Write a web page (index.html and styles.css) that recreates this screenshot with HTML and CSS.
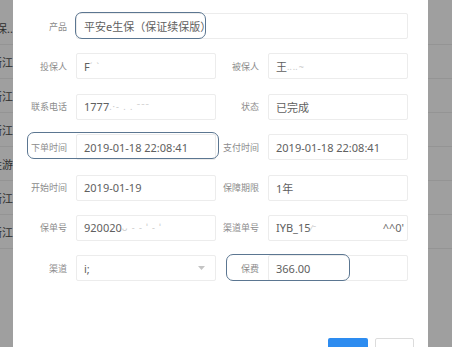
FILE: index.html
```html
<!DOCTYPE html>
<html lang="zh">
<head>
   <meta charset="UTF-8">
   <meta name="viewport" content="width=device-width, initial-scale=1.0">
   <title>保单详情</title>
   <link rel="stylesheet" href="styles.css">
</head>
<body>
   <div class="screen">
       <div class="backdrop left">
           <div class="bg-row">平安保..</div>
           <div class="bg-row">浙江</div>
           <div class="bg-row">浙江</div>
           <div class="bg-row">浙江</div>
           <div class="bg-row">胜游</div>
           <div class="bg-row">浙江</div>
           <div class="bg-row">浙江</div>
       </div>

       <div class="dialog">
           <div class="dialog-head"></div>

           <div class="form">
               <div class="row">
                   <div class="field">
                       <span class="lbl">产品</span>
                       <div class="input wide">平安e生保（保证续保版）<span class="mark mark-product"></span></div>
                   </div>
               </div>

               <div class="row">
                   <div class="field">
                       <span class="lbl">投保人</span>
                       <div class="input">F<span class="blur">ˊ ˋ</span></div>
                   </div>
                   <div class="field">
                       <span class="lbl lbl-r">被保人</span>
                       <div class="input">王<span class="blur">‥‥~</span></div>
                   </div>
               </div>

               <div class="row">
                   <div class="field">
                       <span class="lbl">联系电话</span>
                       <div class="input">1777<span class="blur">.·- . .  ˉˉˉ</span></div>
                   </div>
                   <div class="field">
                       <span class="lbl lbl-r">状态</span>
                       <div class="input">已完成</div>
                   </div>
               </div>

               <div class="row">
                   <div class="field">
                       <span class="lbl">下单时间</span>
                       <div class="input">2019-01-18 22:08:41</div>
                       <span class="mark mark-ordered"></span>
                   </div>
                   <div class="field">
                       <span class="lbl lbl-r">支付时间</span>
                       <div class="input">2019-01-18 22:08:41</div>
                   </div>
               </div>

               <div class="row">
                   <div class="field">
                       <span class="lbl">开始时间</span>
                       <div class="input">2019-01-19</div>
                   </div>
                   <div class="field">
                       <span class="lbl lbl-r">保障期限</span>
                       <div class="input">1年</div>
                   </div>
               </div>

               <div class="row">
                   <div class="field">
                       <span class="lbl">保单号</span>
                       <div class="input">920020<span class="blur">ᴗ     - - ˈ - ˈ</span></div>
                   </div>
                   <div class="field">
                       <span class="lbl lbl-r">渠道单号</span>
                       <div class="input split">
                           <span>IYB_15<span class="blur">⁄ˉ</span></span>
                           <span class="tail">^^0'</span>
                       </div>
                   </div>
               </div>

               <div class="row">
                   <div class="field">
                       <span class="lbl">渠道</span>
                       <div class="input select">
                           <span>i;</span>
                           <svg class="caret" width="7" height="4" viewBox="0 0 7 4"><path d="M0 0h7L3.5 4z" fill="#c4c4c4"/></svg>
                       </div>
                   </div>
                   <div class="field">
                       <span class="lbl lbl-r">保费</span>
                       <div class="input">366.00</div>
                       <span class="mark mark-fee"></span>
                   </div>
               </div>
           </div>

           <div class="footer">
               <span class="btn primary"></span>
               <span class="btn plain"></span>
           </div>
       </div>

       <div class="backdrop right">
           <div class="bg-row first"></div>
           <div class="bg-row"></div>
           <div class="bg-row"></div>
           <div class="bg-row"></div>
           <div class="bg-row"></div>
           <div class="bg-row"></div>
           <div class="bg-row"></div>
       </div>
   </div>
</body>
</html>
```

FILE: styles.css
```css
body {
    margin: 0;
    font-family: "Noto Sans", "Noto Sans CJK SC", sans-serif;
    color: #606060;
}

.screen {
    display: flex;
    width: 452px;
    height: 347px;
    overflow: hidden;
    background-color: #9f9f9f;
}

.backdrop {
    flex: none;
    background-color: #9f9f9f;
}

.backdrop.left {
    width: 13px;
    padding-top: 11px;
}

.backdrop.right {
    width: 24px;
}

.bg-row {
    box-sizing: border-box;
    height: 34px;
    border-bottom: 1px solid #949494;
    display: flex;
    align-items: center;
    justify-content: flex-end;
    overflow: hidden;
    white-space: nowrap;
    font-size: 11px;
    color: #2e2e2e;
}

.backdrop.right .bg-row.first {
    height: 45px;
}

.dialog {
    flex: none;
    width: 415px;
    background-color: #fff;
    display: flex;
    flex-direction: column;
}

.dialog-head {
    height: 6px;
    background-color: #f6f6f6;
}

.form {
    padding-top: 13px;
}

.row {
    display: flex;
    height: 26px;
    margin-bottom: 14.4px;
}

.field {
    position: relative;
    display: flex;
    align-items: center;
}

.lbl {
    width: 54px;
    margin-right: 9px;
    text-align: right;
    font-size: 9px;
    color: #8c8c8c;
}

.lbl.lbl-r {
    width: 43px;
}

.input {
    position: relative;
    box-sizing: border-box;
    width: 140px;
    height: 26px;
    padding: 0 7px;
    border: 1px solid #ececec;
    border-radius: 2px;
    display: flex;
    align-items: center;
    font-size: 11px;
    color: #606060;
    white-space: nowrap;
    overflow: hidden;
}

.input.wide {
    width: 332px;
    overflow: visible;
}

.input.split,
.input.select {
    justify-content: space-between;
}

.input .tail {
    color: #6a6a6a;
    margin-right: -4px;
}

.blur {
    color: #c8c8c8;
    font-size: 9px;
    letter-spacing: 1px;
}

.caret {
    margin-right: 3px;
}

/* annotation boxes drawn over the form */
.mark {
    position: absolute;
    box-sizing: border-box;
    border: 1.5px solid #5b7691;
    border-radius: 7px;
    pointer-events: none;
}

.mark-product {
    left: -2px;
    top: -2px;
    width: 131px;
    height: 27px;
}

.mark-ordered {
    left: 14px;
    top: -2px;
    width: 192px;
    height: 27px;
}

.mark-fee {
    left: 10px;
    top: -1px;
    width: 124px;
    height: 27px;
}

.footer {
    display: flex;
    justify-content: flex-end;
    gap: 7px;
    padding-right: 14px;
    margin-top: 42px;
}

.btn {
    box-sizing: border-box;
    width: 40px;
    height: 24px;
    border-radius: 2px;
}

.btn.primary {
    background-color: #2d8cf0;
}

.btn.plain {
    width: 39px;
    border: 1px solid #dcdcdc;
    background-color: #fff;
}
```
